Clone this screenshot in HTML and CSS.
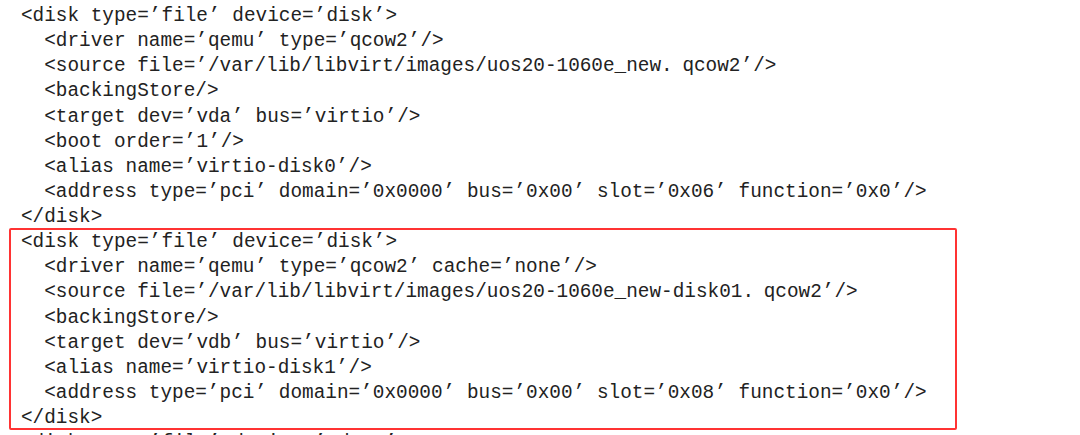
FILE: index.html
```html
<!DOCTYPE html>
<html lang="en">
<head>
<meta charset="utf-8">
<title>disk xml</title>
<link rel="stylesheet" href="styles.css">
</head>
<body>
<div class="code">
<div class="line">&lt;disk type=<span class="q">’</span>file<span class="q">’</span> device=<span class="q">’</span>disk<span class="q">’</span>&gt;</div>
<div class="line">  &lt;driver name=<span class="q">’</span>qemu<span class="q">’</span> type=<span class="q">’</span>qcow2<span class="q">’</span>/&gt;</div>
<div class="line">  &lt;source file=<span class="q">’</span>/var/lib/libvirt/images/uos20-1060e_new<span class="fw">.</span>qcow2<span class="q">’</span>/&gt;</div>
<div class="line">  &lt;backingStore/&gt;</div>
<div class="line">  &lt;target dev=<span class="q">’</span>vda<span class="q">’</span> bus=<span class="q">’</span>virtio<span class="q">’</span>/&gt;</div>
<div class="line">  &lt;boot order=<span class="q">’</span>1<span class="q">’</span>/&gt;</div>
<div class="line">  &lt;alias name=<span class="q">’</span>virtio-disk0<span class="q">’</span>/&gt;</div>
<div class="line">  &lt;address type=<span class="q">’</span>pci<span class="q">’</span> domain=<span class="q">’</span>0x0000<span class="q">’</span> bus=<span class="q">’</span>0x00<span class="q">’</span> slot=<span class="q">’</span>0x06<span class="q">’</span> function=<span class="q">’</span>0x0<span class="q">’</span>/&gt;</div>
<div class="line">&lt;/disk&gt;</div>
<div class="box">
<div class="line">&lt;disk type=<span class="q">’</span>file<span class="q">’</span> device=<span class="q">’</span>disk<span class="q">’</span>&gt;</div>
<div class="line">  &lt;driver name=<span class="q">’</span>qemu<span class="q">’</span> type=<span class="q">’</span>qcow2<span class="q">’</span> cache=<span class="q">’</span>none<span class="q">’</span>/&gt;</div>
<div class="line">  &lt;source file=<span class="q">’</span>/var/lib/libvirt/images/uos20-1060e_new-disk01<span class="fw">.</span>qcow2<span class="q">’</span>/&gt;</div>
<div class="line">  &lt;backingStore/&gt;</div>
<div class="line">  &lt;target dev=<span class="q">’</span>vdb<span class="q">’</span> bus=<span class="q">’</span>virtio<span class="q">’</span>/&gt;</div>
<div class="line">  &lt;alias name=<span class="q">’</span>virtio-disk1<span class="q">’</span>/&gt;</div>
<div class="line">  &lt;address type=<span class="q">’</span>pci<span class="q">’</span> domain=<span class="q">’</span>0x0000<span class="q">’</span> bus=<span class="q">’</span>0x00<span class="q">’</span> slot=<span class="q">’</span>0x08<span class="q">’</span> function=<span class="q">’</span>0x0<span class="q">’</span>/&gt;</div>
<div class="line">&lt;/disk&gt;</div>
</div>
<div class="line">&lt;disk type=<span class="q">’</span>file<span class="q">’</span> device=<span class="q">’</span>cdrom<span class="q">’</span>&gt;</div>
</div>
</body>
</html>
```

FILE: styles.css
```css
html, body {
  margin: 0;
  padding: 0;
  background: #ffffff;
  overflow: hidden;
}

.code {
  padding: 4px 0 0 21px;
  font-family: "Liberation Mono", "DejaVu Sans Mono", monospace;
  font-size: 19.37px;
  color: #222222;
}

.line {
  height: 25.14px;
  line-height: 25.14px;
  white-space: pre;
}

.q {
  padding: 0 0.55px;
}

.fw {
  display: inline-block;
  width: 21.3px;
}

.box {
  box-sizing: border-box;
  width: 948px;
  height: 202px;
  margin: -2px 0 1px -12px;
  padding-left: 10px;
  border: 2px solid #ff3333;
  border-radius: 2px;
}
```
